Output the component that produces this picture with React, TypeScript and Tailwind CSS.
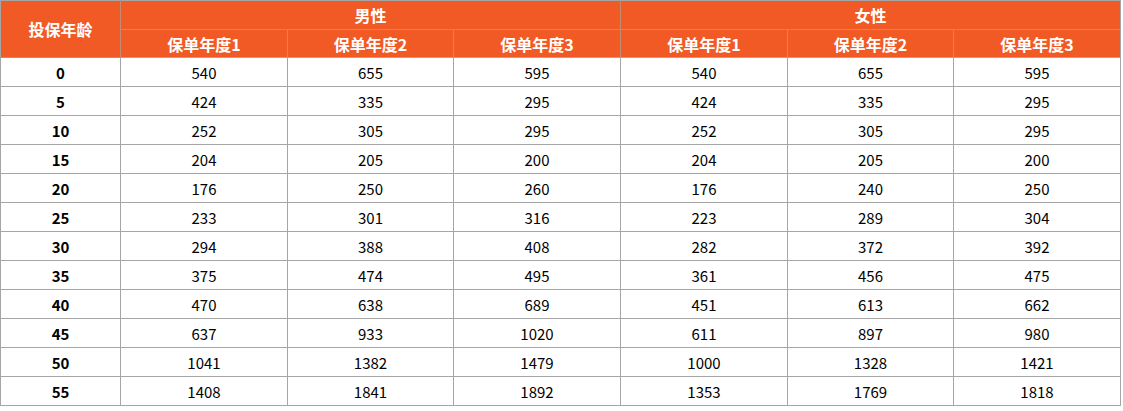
import React from "react";

// 投保年龄 / 男性 x3 / 女性 x3
const rows: [number, number[], number[]][] = [
  [0, [540, 655, 595], [540, 655, 595]],
  [5, [424, 335, 295], [424, 335, 295]],
  [10, [252, 305, 295], [252, 305, 295]],
  [15, [204, 205, 200], [204, 205, 200]],
  [20, [176, 250, 260], [176, 240, 250]],
  [25, [233, 301, 316], [223, 289, 304]],
  [30, [294, 388, 408], [282, 372, 392]],
  [35, [375, 474, 495], [361, 456, 475]],
  [40, [470, 638, 689], [451, 613, 662]],
  [45, [637, 933, 1020], [611, 897, 980]],
  [50, [1041, 1382, 1479], [1000, 1328, 1421]],
  [55, [1408, 1841, 1892], [1353, 1769, 1818]],
];

const years = ["保单年度1", "保单年度2", "保单年度3"];

const App = () => {
  return (
    <div className="bg-white w-[1123px] h-[411px] font-['Noto_Sans_CJK_SC','Noto_Sans',sans-serif]">
      <table className="w-[1121px] table-fixed border-collapse text-[15px] leading-none">
        <colgroup>
          <col className="w-[120px]" />
          <col className="w-[167px]" />
          <col className="w-[166px]" />
          <col className="w-[167px]" />
          <col className="w-[167px]" />
          <col className="w-[166px]" />
          <col className="w-[167px]" />
        </colgroup>
        <thead className="bg-[#f15a24] text-white text-[16px]">
          <tr className="h-[29px]">
            <th
              rowSpan={2}
              className="border border-[#c48a72] border-t-[#a6a6a6] border-l-[#a6a6a6] font-bold"
            >
              投保年龄
            </th>
            <th colSpan={3} className="border border-[#c48a72] border-t-[#a6a6a6] font-bold">
              男性
            </th>
            <th colSpan={3} className="border border-[#c48a72] border-t-[#a6a6a6] border-r-[#a6a6a6] font-bold">
              女性
            </th>
          </tr>
          <tr className="h-[28px]">
            {[...years, ...years].map((y, i) => (
              <th key={i} className="border border-[#c48a72] border-b-[#a6a6a6] last:border-r-[#a6a6a6] font-bold">
                {y}
              </th>
            ))}
          </tr>
        </thead>
        <tbody className="text-black">
          {rows.map(([age, male, female]) => (
            <tr key={age} className="h-[29px]">
              <td className="border border-[#a6a6a6] text-center font-bold">{age}</td>
              {[...male, ...female].map((v, i) => (
                <td key={i} className="border border-[#a6a6a6] text-center">
                  {v}
                </td>
              ))}
            </tr>
          ))}
        </tbody>
      </table>
    </div>
  );
};

export default App;
